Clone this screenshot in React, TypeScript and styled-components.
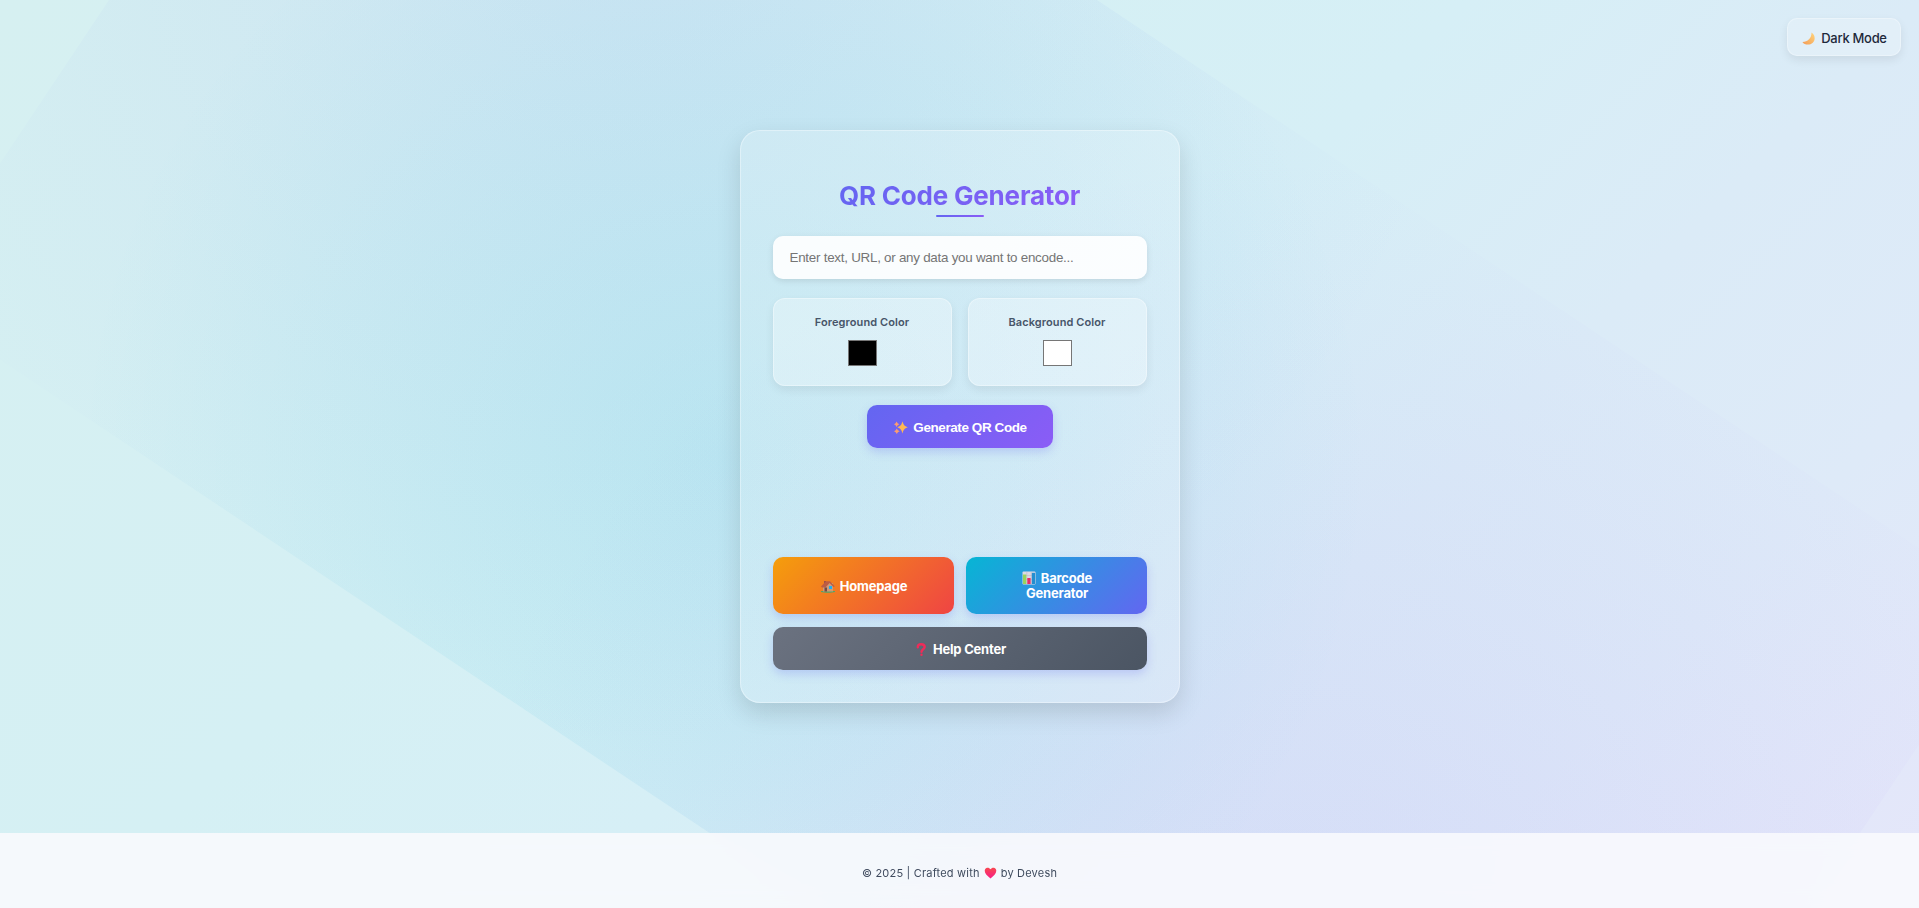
import React from "react";
import styled, { createGlobalStyle } from "styled-components";

const GlobalStyle = createGlobalStyle`
  * { box-sizing: border-box; }
  html, body { margin: 0; height: 100%; overflow: hidden; }
  body { font-family: Inter, "Liberation Sans", sans-serif; color: #1e293b; }
  #root { height: 100%; }
`;

const Page = styled.div`
  position: relative;
  height: 908px;
  overflow: hidden;
  display: flex;
  flex-direction: column;
  background: linear-gradient(135deg, #d6f0f1 0%, #d5f0f4 35%, #d6eff6 52%, #dbebf7 68%, #deeaf8 82%, #e5e6fa 100%);
`;

const Aurora = styled.div`
  position: absolute;
  inset: 0;
  transform: rotate(33.7deg);
  background:
    radial-gradient(circle at 20% 20%, rgba(99, 102, 241, 0.085), transparent 50%),
    radial-gradient(circle at 80% 80%, rgba(139, 92, 246, 0.1), transparent 50%),
    radial-gradient(circle at 40% 65%, rgba(6, 182, 212, 0.12), transparent 50%);
`;

const ThemeButton = styled.button`
  position: absolute;
  top: 18px;
  right: 18px;
  width: 114px;
  height: 38px;
  padding: 2px 0 0 1px;
  display: flex;
  align-items: center;
  justify-content: center;
  gap: 6px;
  border: 1px solid rgba(255, 255, 255, 0.3);
  border-radius: 10px;
  background: rgba(255, 255, 255, 0.2);
  box-shadow: 0 4px 10px rgba(0, 0, 0, 0.08);
  color: #1e293b;
  font: 500 13px Inter, sans-serif;
  letter-spacing: -0.3px;
`;

const Main = styled.main`
  position: relative;
  flex: 1;
  display: flex;
  align-items: center;
  justify-content: center;
`;

const Card = styled.section`
  width: 440px;
  height: 573px;
  padding: 47px 32px 32px;
  display: flex;
  flex-direction: column;
  align-items: center;
  border: 1px solid rgba(255, 255, 255, 0.35);
  border-radius: 20px;
  background: rgba(255, 255, 255, 0.2);
  box-shadow: 0 10px 24px rgba(0, 0, 0, 0.13);
`;

const Title = styled.h1`
  margin: 0;
  height: 37px;
  line-height: 36px;
  font-size: 26px;
  font-weight: 700;
  letter-spacing: -0.2px;
  background: linear-gradient(135deg, #6366f1, #8b5cf6);
  background-clip: text;
  -webkit-background-clip: text;
  color: transparent;
`;

const Underline = styled.div`
  width: 48px;
  height: 2px;
  border-radius: 1px;
  background: linear-gradient(135deg, #6366f1, #8b5cf6);
`;

const TextInput = styled.input`
  width: 374px;
  height: 43px;
  margin: 19px 0 19px;
  padding: 0 17px;
  border: 0;
  border-radius: 10px;
  background: rgba(255, 255, 255, 0.9);
  box-shadow: 0 2px 6px rgba(0, 0, 0, 0.1);
  font: 13.4px "Liberation Sans", sans-serif;
  letter-spacing: -0.26px;
  &::placeholder { color: #757575; }
`;

const ColorRow = styled.div`
  display: flex;
  gap: 16px;
`;

const ColorBox = styled.div`
  width: 179px;
  height: 88px;
  padding-top: 16px;
  display: flex;
  flex-direction: column;
  align-items: center;
  gap: 11px;
  border: 1px solid rgba(255, 255, 255, 0.35);
  border-radius: 12px;
  background: rgba(255, 255, 255, 0.3);
  box-shadow: 0 4px 10px rgba(0, 0, 0, 0.07);
  font-size: 11px;
  font-weight: 600;
  line-height: 14px;
  letter-spacing: 0.1px;
  color: #475569;
`;

const Swatch = styled.span<{ $color: string }>`
  width: 29px;
  height: 26px;
  border: 1px solid #767676;
  background: ${(p) => p.$color};
`;

const Button = styled.button<{ $bg: string; $w: number; $h?: number }>`
  width: ${(p) => p.$w}px;
  height: ${(p) => p.$h ?? 43}px;
  padding: 1px 0 0 2px;
  border: 0;
  border-radius: 10px;
  background: ${(p) => p.$bg};
  box-shadow: 0 4px 10px rgba(99, 102, 241, 0.25);
  color: #fff;
  font: 700 13px/15px Inter, sans-serif;
  letter-spacing: -0.2px;
  text-align: center;
  svg { margin-right: 5px; vertical-align: -2px; }
`;

const GenerateButton = styled(Button)`
  margin-top: 19px;
  font: 700 13.5px/15px "Liberation Sans", sans-serif;
  letter-spacing: -0.42px;
`;

const Links = styled.nav`
  margin-top: auto;
  display: flex;
  flex-wrap: wrap;
  gap: 13px 12px;
`;

const Footer = styled.footer`
  position: relative;
  height: 75px;
  padding-top: 5px;
  display: flex;
  align-items: center;
  justify-content: center;
  gap: 4px;
  background: rgba(248, 249, 253, 0.9);
  backdrop-filter: blur(10px);
  color: #3f4b5e;
  font-size: 11px;
  letter-spacing: 0.2px;
`;

const Moon = () => (
  <svg width="13" height="13" viewBox="0 0 13 13">
    <defs>
      <linearGradient id="moon" x1="1" y1="0" x2="0" y2="1">
        <stop offset="0" stopColor="#ffd57c" /><stop offset="1" stopColor="#f39b55" />
      </linearGradient>
    </defs>
    <path d="M9.500 .5C13.300 3 13.600 8 10.800 10.700C8 13.300 2.600 13.300.4 9.900C3.100 9.900 5.200 9.200 7 7.300C8.700 5.500 9.600 3.300 9.500 .5Z" fill="url(#moon)" />
  </svg>
);

const Sparkles = () => (
  <svg width="14" height="13" viewBox="0 0 14 13">
    <path d="M8.500 .3C9.500 3.800 10.400 5.200 13.800 6.300C10.400 7.400 9.500 8.800 8.500 12.500C7.500 8.800 6.600 7.400 3.300 6.300C6.600 5.200 7.500 3.800 8.500 .3Z" fill="#ffb951" />
    <path d="M2.600 .6L3.600 2.300L5.300 3.300L3.600 4.300L2.600 6L1.600 4.300L0 3.300L1.600 2.300ZM2.800 7.500L3.900 9.200L5.700 10.200L3.900 11.200L2.800 12.900L1.700 11.200L0 10.200L1.700 9.200Z" fill="#fc9d70" />
  </svg>
);

const House = () => (
  <svg width="14" height="13" viewBox="0 0 14 13">
    <path d="M0 11H14V12C11 13 3 13 0 12Z" fill="#50a56d" />
    <path d="M2 6L5 3H12V11.500H2Z" fill="#d09a78" />
    <path d="M3 1H5V5H3Z" fill="#9d5145" />
    <path d="M0 6.500L5 1.300H9L13.700 6.300L12.500 7L8.600 3L4.500 7.500H1Z" fill="#bd5c43" />
    <path d="M3.500 7.500H6V11.500H3.500Z" fill="#704a48" />
    <path d="M8 6H11V9H8Z" fill="#20aef2" />
  </svg>
);

const Chart = () => (
  <svg width="14" height="14" viewBox="0 0 14 14">
    <rect x=".5" y=".5" width="13" height="13" rx="1" fill="#dcd9e3" />
    <path d="M.5 4.500H13.500M.5 8.500H13.500M4.800 .5V13.500M9.200 .5V13.500" stroke="#b9b5c5" strokeWidth=".5" />
    <rect x="1" y="3.500" width="3.300" height="9.500" fill="#98d35e" />
    <rect x="5.300" y="7" width="3.300" height="6" fill="#e72d68" />
    <rect x="9.800" y="1.800" width="3.200" height="11.200" fill="#238ed0" />
  </svg>
);

const Question = () => (
  <svg width="13" height="13" viewBox="0 0 13 13">
    <path d="M2.800 4.200C2.800 1.800 4.500 1.200 6.200 1.200C8.200 1.200 9.700 2.300 9.700 4C9.700 6.200 6.500 6.200 6.500 8.800" fill="none" stroke="#ef2c59" strokeWidth="2.400" strokeLinecap="round" />
    <circle cx="6.500" cy="11.700" r="1.200" fill="#ef2c59" />
  </svg>
);

const Heart = () => (
  <svg width="13" height="12" viewBox="0 0 13 12">
    <defs>
      <linearGradient id="heart" x1="0" y1="0" x2="0" y2="1">
        <stop offset="0" stopColor="#f8484f" /><stop offset="1" stopColor="#f81c86" />
      </linearGradient>
    </defs>
    <path d="M6.500 2.300C5.200 .2 2.500 .2 1.200 2C-.5 5 2.500 8.500 6.500 11.500C10.500 8.500 13.500 5 11.800 2C10.500 .2 7.800 .2 6.500 2.300Z" fill="url(#heart)" />
  </svg>
);

export default function App() {
  return (
    <Page>
      <GlobalStyle />
      <Aurora />
      <Main>
        <Card>
          <Title>QR Code Generator</Title>
          <Underline />
          <TextInput placeholder="Enter text, URL, or any data you want to encode..." />
          <ColorRow>
            <ColorBox>Foreground Color<Swatch $color="#000" /></ColorBox>
            <ColorBox>Background Color<Swatch $color="#fff" /></ColorBox>
          </ColorRow>
          <GenerateButton $w={186} $bg="linear-gradient(135deg, #6366f1, #8b5cf6)">
            <Sparkles />Generate QR Code
          </GenerateButton>
          <Links>
            <Button $w={181} $h={57} $bg="linear-gradient(135deg, #f59e0b, #ef4444)"><House />Homepage</Button>
            <Button $w={181} $h={57} $bg="linear-gradient(135deg, #06b6d4, #6366f1)"><Chart />Barcode<br />Generator</Button>
            <Button $w={374} $bg="linear-gradient(135deg, #6b7280, #4b5563)"><Question />Help Center</Button>
          </Links>
        </Card>
      </Main>
      <Footer>© 2025 | Crafted with <Heart /> by Devesh</Footer>
      <ThemeButton><Moon />Dark Mode</ThemeButton>
    </Page>
  );
}
